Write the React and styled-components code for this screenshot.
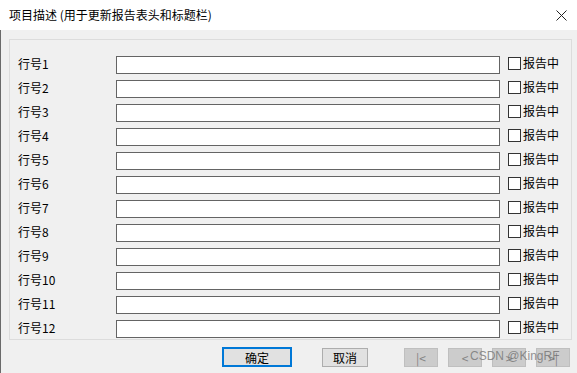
import styled, { createGlobalStyle } from "styled-components";

const GlobalStyle = createGlobalStyle`
    *, *::before, *::after {
        box-sizing: border-box;
    }
    html, body {
        margin: 0;
        padding: 0;
        background: #f0f0f0;
    }
    body {
        font-family: "Noto Sans CJK SC", "Liberation Sans", sans-serif;
        font-size: 12px;
        color: #000;
    }
`

const rows = Array.from({length: 12}, (_, i) => `行号${i + 1}`);

function App(){
    return(
        <Window>
            <GlobalStyle/>
            <TitleBar>
                <Title>项目描述 (用于更新报告表头和标题栏)</Title>
                <CloseBtn>
                    <svg width="11" height="11" viewBox="0 0 11 11">
                        <path d="M0.5 0.5 L10.5 10.5 M10.5 0.5 L0.5 10.5" stroke="#222" strokeWidth="1" fill="none"/>
                    </svg>
                </CloseBtn>
            </TitleBar>
            <Body>
                <GroupBox>
                    {rows.map(label => (
                        <Row key={label}>
                            <RowLabel>{label}</RowLabel>
                            <TextBox/>
                            <CheckWrap>
                                <CheckBox/>
                                <span>报告中</span>
                            </CheckWrap>
                        </Row>
                    ))}
                </GroupBox>
                <Footer>
                    <Button primary width={70}>确定</Button>
                    <Button width={46}>取消</Button>
                    <NavGroup>
                        <Button disabled width={34}>|&lt;</Button>
                        <Button disabled width={34}>&lt;</Button>
                        <Button disabled width={34}>&gt;</Button>
                        <Button disabled width={34}>&gt;|</Button>
                    </NavGroup>
                    <Watermark>CSDN @KingRF</Watermark>
                </Footer>
            </Body>
        </Window>
    )
}

const Window = styled.div`
    width: 577px;
    height: 373px;
    display: flex;
    flex-direction: column;
    overflow: hidden;
`
const TitleBar = styled.div`
    flex-shrink: 0;
    height: 30px;
    background: #fff;
    display: flex;
    align-items: center;
    padding-left: 9px;
    padding-right: 10px;
`
const Title = styled.div`
    flex: 1;
    font-size: 12px;
    line-height: 14px;
`
const CloseBtn = styled.div`
    width: 11px;
    height: 11px;
    display: flex;
`
const Body = styled.div`
    flex: 1;
    border-left: 1px solid #6a6a6a;
    padding: 9px 5px 0 8px;
    display: flex;
    flex-direction: column;
`
const GroupBox = styled.div`
    flex-shrink: 0;
    height: 301px;
    border: 1px solid #dcdcdc;
    padding: 16px 0 0 8px;
    display: flex;
    flex-direction: column;
    gap: 6px;
`
const Row = styled.div`
    display: flex;
    align-items: center;
    height: 18px;
`
const RowLabel = styled.div`
    width: 98px;
    font-size: 12px;
    line-height: 14px;
    margin-top: -2px;
`
const TextBox = styled.div`
    width: 384px;
    height: 18px;
    border: 1px solid #646464;
    background: #fff;
`
const CheckWrap = styled.div`
    display: flex;
    align-items: center;
    margin-left: 8px;
    gap: 2px;
    font-size: 12px;
    line-height: 14px;
    margin-top: -4px;
`
const CheckBox = styled.div`
    width: 13px;
    height: 13px;
    border: 1px solid #333;
    background: #fff;
`
const Footer = styled.div`
    position: relative;
    display: flex;
    align-items: flex-end;
    padding: 7px 0 0 213px;
`
const Button = styled.div`
    width: ${props => props.width}px;
    height: ${props => props.primary ? 20 : 19}px;
    margin-right: ${props => props.primary ? 30 : 0}px;
    display: flex;
    align-items: center;
    justify-content: center;
    font-size: 12px;
    background: ${props => props.disabled ? '#cccccc' : '#e1e1e1'};
    border: ${props => props.primary ? '2px solid #0078d7' : props.disabled ? '1px solid #bfbfbf' : '1px solid #adadad'};
    color: ${props => props.disabled ? '#838383' : '#000'};
`
const NavGroup = styled.div`
    display: flex;
    gap: 10px;
    margin-left: 36px;
`
const Watermark = styled.div`
    position: absolute;
    left: 461px;
    top: 9px;
    font-family: "Liberation Sans", sans-serif;
    font-size: 12px;
    line-height: 15px;
    color: rgba(110, 110, 110, 0.75);
`

export default App;
